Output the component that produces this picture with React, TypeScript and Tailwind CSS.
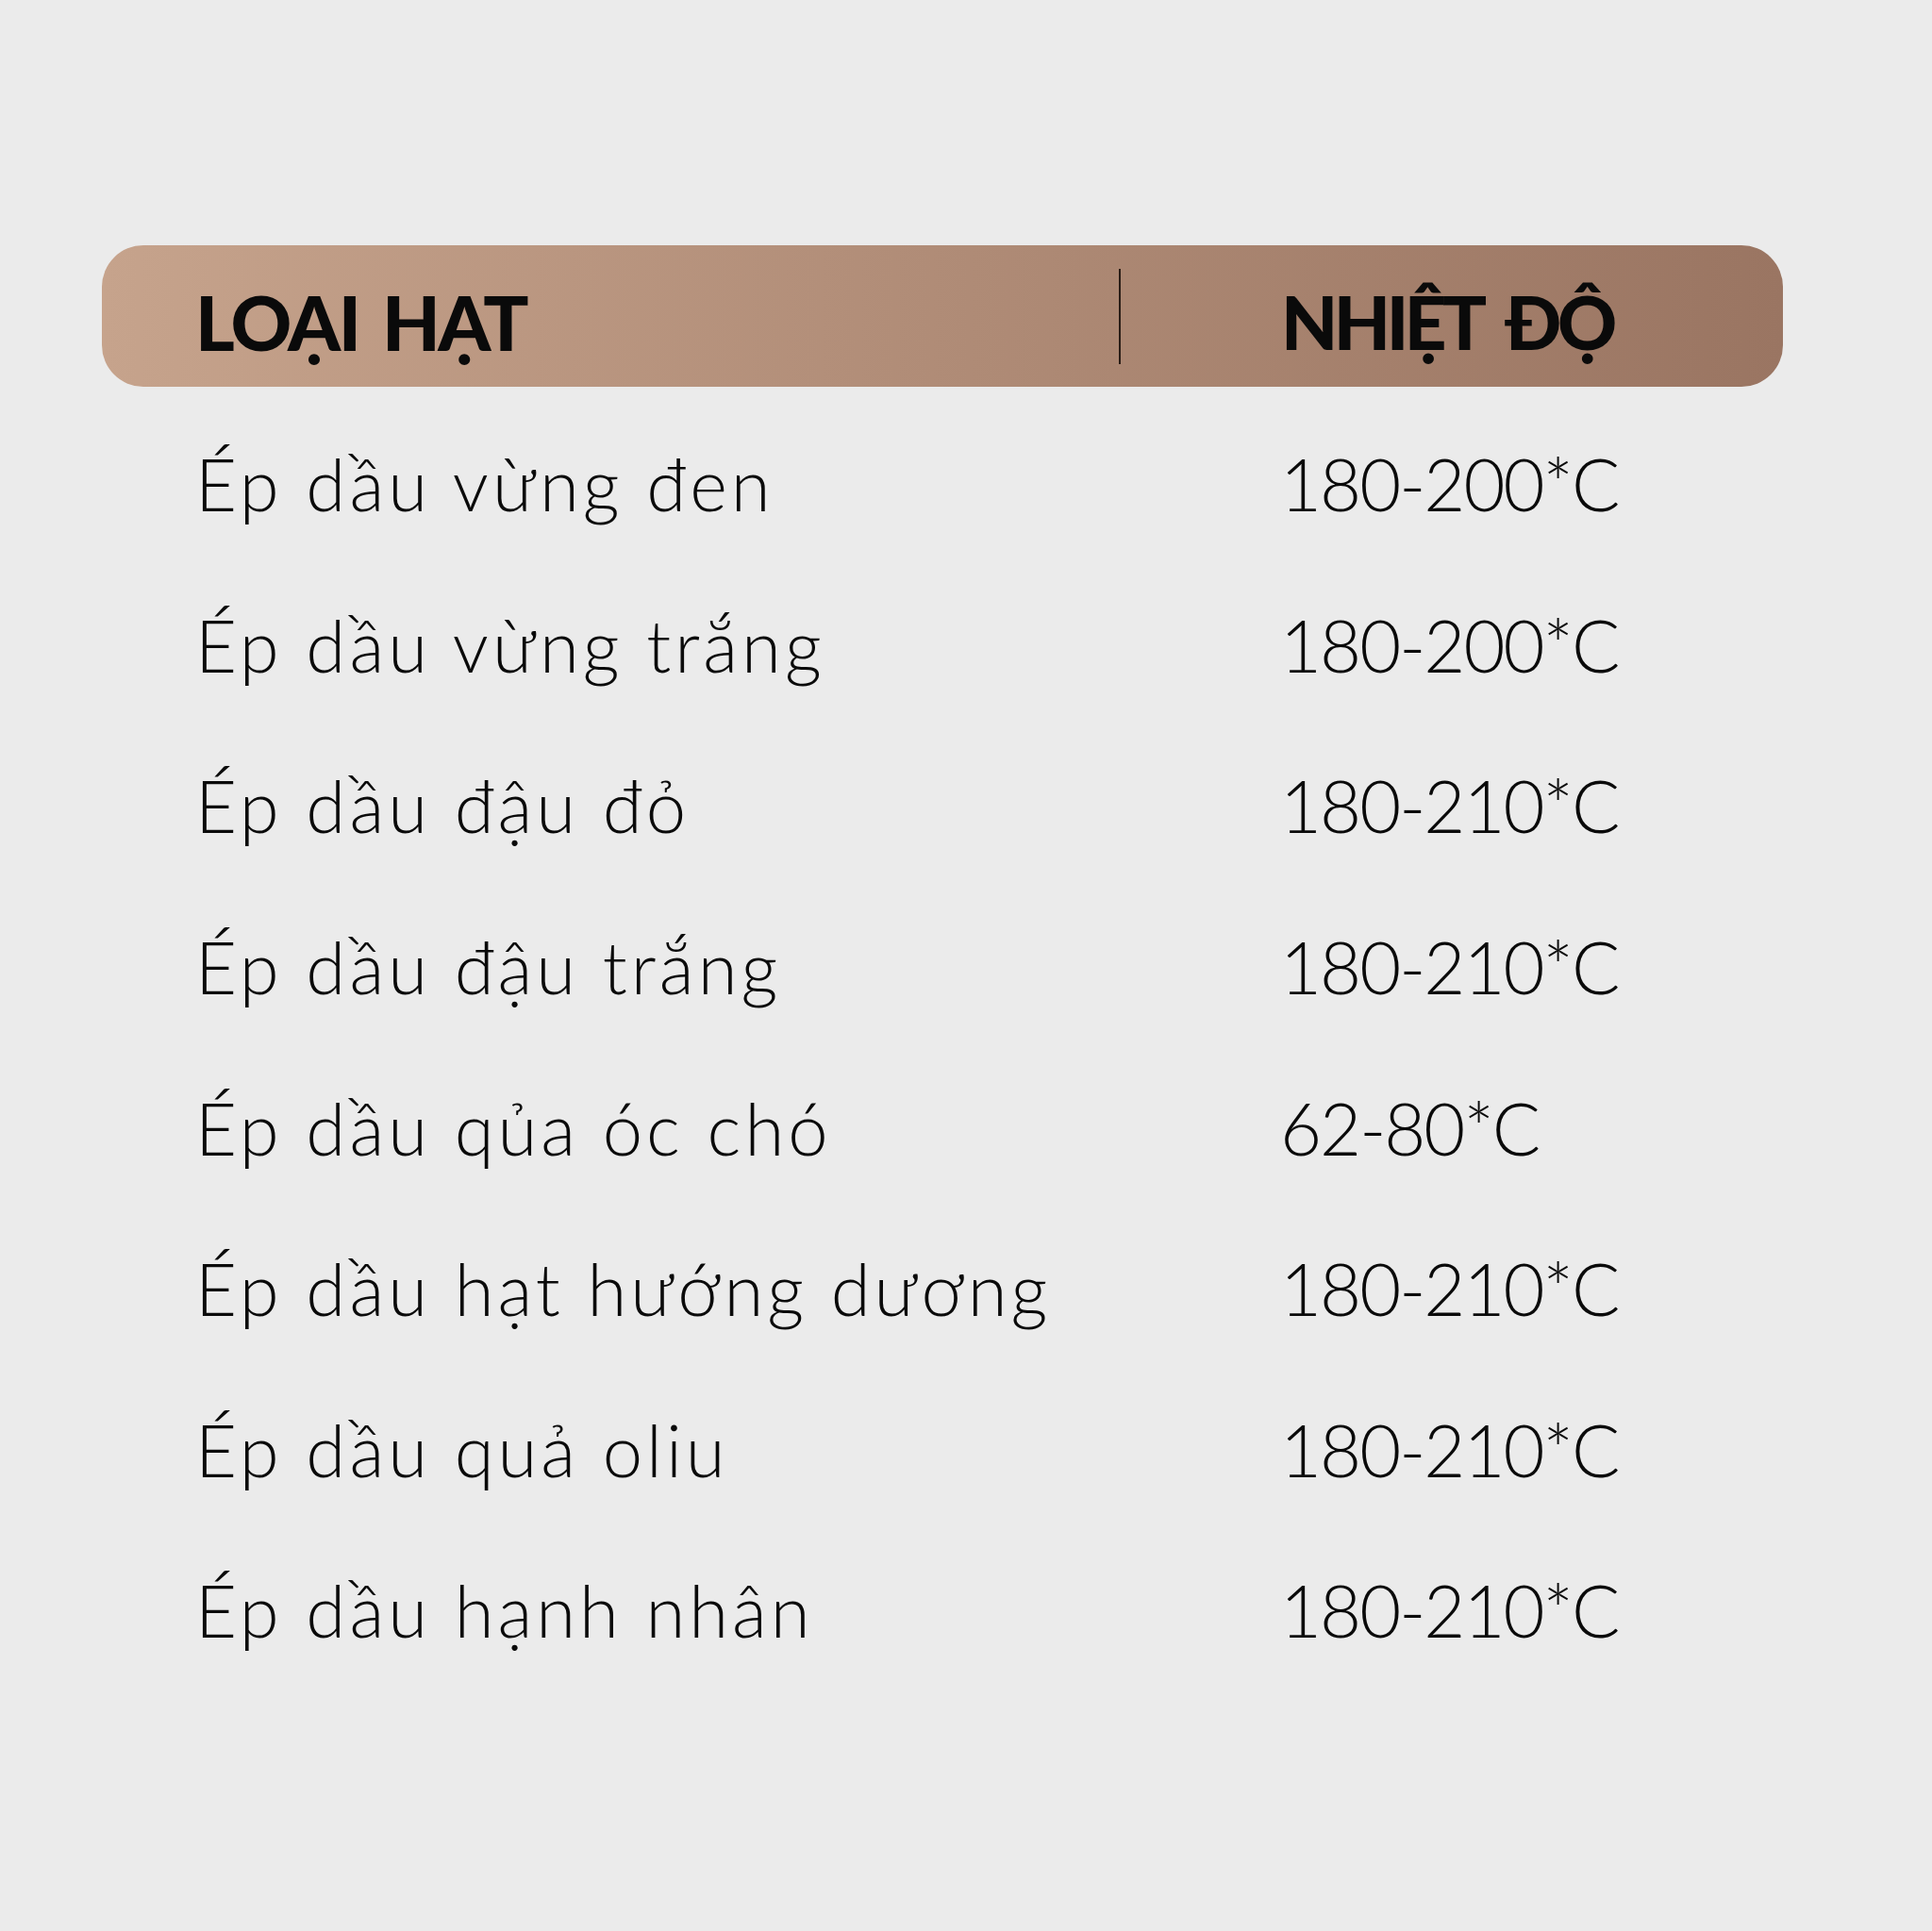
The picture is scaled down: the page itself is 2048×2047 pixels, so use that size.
import React from 'react';

const rows = [
  { name: 'Ép dầu vừng đen', temp: '180-200*C' },
  { name: 'Ép dầu vừng trắng', temp: '180-200*C' },
  { name: 'Ép dầu đậu đỏ', temp: '180-210*C' },
  { name: 'Ép dầu đậu trắng', temp: '180-210*C' },
  { name: 'Ép dầu qủa óc chó', temp: '62-80*C' },
  { name: 'Ép dầu hạt hướng dương', temp: '180-210*C' },
  { name: 'Ép dầu quả oliu', temp: '180-210*C' },
  { name: 'Ép dầu hạnh nhân', temp: '180-210*C' },
];

export default function App() {
  return (
    <div className="w-full h-[2047px] bg-[#ebebeb] pl-[108px] pt-[260px] text-[#0a0a0a] font-['Lato',sans-serif]">
      <div className="w-[1782px]">
        <div className="flex items-center h-[150px] rounded-[44px] bg-gradient-to-r from-[#c6a38c] to-[#9a7562]">
          <div className="w-[1078px] pl-[99px] pt-[12px] text-[80px] font-black leading-none tracking-[-2.5px] [word-spacing:8px]">
            LOẠI HẠT
          </div>
          <div className="w-[2px] h-[101px] bg-[#2a1d16]" />
          <div className="pl-[170px] pt-[12px] text-[78px] font-black leading-none tracking-[-4.5px] [word-spacing:12px]">
            NHIỆT ĐỘ
          </div>
        </div>

        <div className="mt-[18px] flex flex-col">
          {rows.map((r) => (
            <div key={r.name} className="flex items-center h-[170.6px] text-[76px] font-light leading-none">
              <div className="w-[1080px] pl-[99px] tracking-[4px]">{r.name}</div>
              <div className="pl-[169px] tracking-[-2px]">{r.temp}</div>
            </div>
          ))}
        </div>
      </div>
    </div>
  );
}
